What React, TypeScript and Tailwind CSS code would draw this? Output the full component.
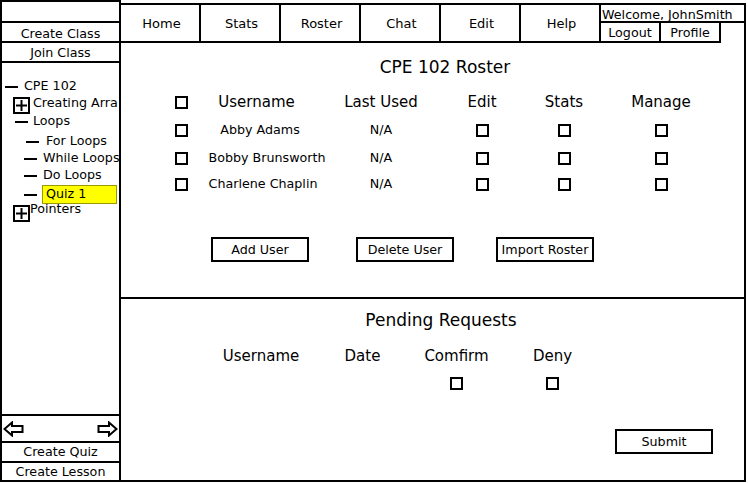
import React from 'react';

function Box() {
  return <span className="inline-block w-[13px] h-[13px] border-2 border-black" />;
}

function Dash({ className = '' }: { className?: string }) {
  return <span className={`block w-[13px] h-[2px] bg-black shrink-0 ${className}`} />;
}

function PlusBox({ className = '' }: { className?: string }) {
  return (
    <svg width="17" height="17" viewBox="0 0 17 17" className={`shrink-0 ${className}`}>
      <rect x="1" y="1" width="15" height="15" fill="white" stroke="black" strokeWidth="2" />
      <line x1="3" y1="8.5" x2="14" y2="8.5" stroke="black" strokeWidth="2" />
      <line x1="8.5" y1="3" x2="8.5" y2="14" stroke="black" strokeWidth="2" />
    </svg>
  );
}

function Arrow({ dir }: { dir: 'left' | 'right' }) {
  const d =
    dir === 'left'
      ? 'M1.5 8 L9 1.5 L9 5 L19.5 5 L19.5 11 L9 11 L9 14.5 Z'
      : 'M19.5 8 L12 1.5 L12 5 L1.5 5 L1.5 11 L12 11 L12 14.5 Z';
  return (
    <svg width="21" height="16" viewBox="0 0 21 16">
      <path d={d} fill="white" stroke="black" strokeWidth="2" strokeLinejoin="miter" />
    </svg>
  );
}

function Sidebar() {
  return (
    <div className="w-[121px] h-[482px] flex flex-col border-2 border-black shrink-0 text-[12.7px]">
      <div className="h-[19px]" />
      <div className="h-[20px] border-t-2 border-black flex items-center justify-center leading-none pt-[4px]">Create Class</div>
      <div className="h-[20px] border-t-2 border-black flex items-center justify-center leading-none pt-[3px]">Join Class</div>
      <div className="flex-1 border-t-2 border-black pt-[15px] overflow-hidden whitespace-nowrap leading-none">
        <div className="h-[17px] flex items-center">
          <Dash className="ml-[3px]" />
          <span className="ml-[6px]">CPE 102</span>
        </div>
        <div className="h-[17px] mt-[2px] flex items-center">
          <PlusBox className="ml-[11px]" />
          <span className="ml-[3px] -mt-[5px]">Creating Arra</span>
        </div>
        <div className="h-[13px] mt-[1px] flex items-center">
          <Dash className="ml-[13px]" />
          <span className="ml-[5px]">Loops</span>
        </div>
        <div className="h-[13px] mt-[7px] flex items-center">
          <Dash className="ml-[24px]" />
          <span className="ml-[7px]">For Loops</span>
        </div>
        <div className="h-[13px] mt-[4px] flex items-center">
          <Dash className="ml-[22px]" />
          <span className="ml-[6px]">While Loops</span>
        </div>
        <div className="h-[13px] mt-[4px] flex items-center">
          <Dash className="ml-[22px]" />
          <span className="ml-[6px]">Do Loops</span>
        </div>
        <div className="h-[19px] mt-[3px] flex items-center">
          <Dash className="ml-[22px]" />
          <span className="ml-[5px] w-[75px] h-[19px] bg-[#ffff00] border border-[#9a9a00] flex items-center pl-[3px]">Quiz 1</span>
        </div>
        <div className="h-[17px] mt-[1px] flex items-center">
          <PlusBox className="ml-[11px]" />
          <span className="-mt-[8px]">Pointers</span>
        </div>
      </div>
      <div className="h-[27px] border-t-2 border-black flex items-center justify-between pl-[1px] pr-[1px]">
        <Arrow dir="left" />
        <Arrow dir="right" />
      </div>
      <div className="h-[20px] border-t-2 border-black flex items-center justify-center leading-none">Create Quiz</div>
      <div className="h-[19px] border-t-2 border-black flex items-center justify-center leading-none pt-[1px]">Create Lesson</div>
    </div>
  );
}

const tabs = ['Home', 'Stats', 'Roster', 'Chat', 'Edit', 'Help'];

const users = [
  { name: 'Abby Adams', pad: 'pl-0' },
  { name: 'Bobby Brunsworth', pad: 'pl-[14px]' },
  { name: 'Charlene Chaplin', pad: 'pl-[6px]' },
];

export default function App() {
  return (
    <div className="w-[746px] h-[482px] flex bg-white text-black font-['DejaVu_Sans',sans-serif]">
      <Sidebar />
      <div className="flex-1 flex flex-col">
        {/* top nav */}
        <div className="flex pt-[3px]">
          {tabs.map((t) => (
            <div
              key={t}
              className="w-[80px] h-[40px] border-y-2 border-r-2 border-black flex items-center justify-center text-[13px] pt-[1px] pl-[3px]"
            >
              {t}
            </div>
          ))}
          <div className="flex-1 flex flex-col border-r-2 border-black text-[12.7px]">
            <div className="h-[20px] border-y-2 border-black leading-[13px] pt-[3px] pl-[1px] whitespace-nowrap">
              Welcome, JohnSmith
            </div>
            <div className="h-[20px] flex">
              <div className="w-[60px] border-r-2 border-b-2 border-black flex items-center justify-center leading-none pt-[2px]">Logout</div>
              <div className="w-[60px] border-r-2 border-b-2 border-black flex items-center justify-center leading-none pt-[2px]">Profile</div>
            </div>
          </div>
        </div>

        {/* main panel */}
        <div className="flex-1 flex flex-col border-r-2 border-b-2 border-black">
          <div className="h-[256px] border-b-2 border-black flex flex-col">
            <div className="pt-[14px] pl-[25px] text-center text-[17px] leading-[20px]">CPE 102 Roster</div>
            <div className="mt-[11px] ml-[40px] grid grid-cols-[40px_118px_124px_78px_86px_108px] grid-rows-[28px_28px_28px_24px] items-center justify-items-center">
              <Box />
              <span className="text-[15px] pr-[7px]">Username</span>
              <span className="text-[15px]">Last Used</span>
              <span className="text-[15px]">Edit</span>
              <span className="text-[15px]">Stats</span>
              <span className="text-[15px]">Manage</span>
              {users.map((u) => (
                <React.Fragment key={u.name}>
                  <Box />
                  <span className={`text-[12.7px] whitespace-nowrap ${u.pad}`}>{u.name}</span>
                  <span className="text-[12.7px]">N/A</span>
                  <Box />
                  <Box />
                  <Box />
                </React.Fragment>
              ))}
            </div>
            <div className="mt-[41px] ml-[90px] flex text-[12.7px]">
              <button className="w-[98px] h-[25px] border-2 border-black flex items-center justify-center">Add User</button>
              <button className="ml-[47px] w-[98px] h-[25px] border-2 border-black flex items-center justify-center">Delete User</button>
              <button className="ml-[42px] w-[98px] h-[25px] border-2 border-black flex items-center justify-center whitespace-nowrap">Import Roster</button>
            </div>
          </div>

          <div className="flex-1 flex flex-col">
            <div className="pt-[11px] pl-[17px] text-center text-[17px] leading-[20px]">Pending Requests</div>
            <div className="mt-[16px] ml-[90px] grid grid-cols-[100px_103px_85px_107px] grid-rows-[20px_34px] items-center justify-items-center text-[15px]">
              <span>Username</span>
              <span>Date</span>
              <span>Comfirm</span>
              <span>Deny</span>
              <span />
              <span />
              <Box />
              <Box />
            </div>
            <button className="mt-auto self-end mr-[31px] mb-[26px] w-[98px] h-[25px] border-2 border-black flex items-center justify-center text-[12.7px]">
              Submit
            </button>
          </div>
        </div>
      </div>
    </div>
  );
}
